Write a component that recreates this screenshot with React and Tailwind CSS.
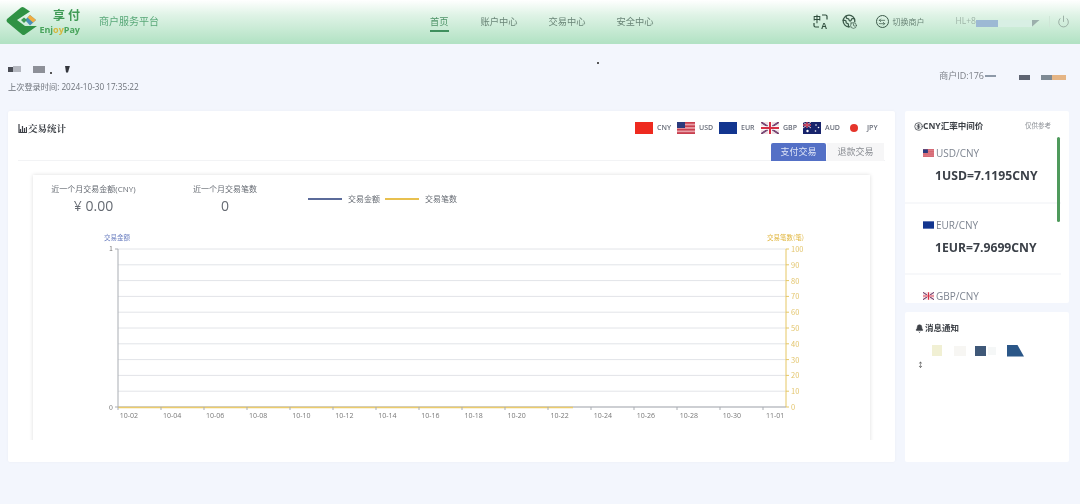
import React from "react";
import { Power, Earth, Clock, ArrowLeftRight, Bell, CircleDollarSign } from "lucide-react";

const nav = ["首页", "账户中心", "交易中心", "安全中心"];
const days = ["10-02", "10-04", "10-06", "10-08", "10-10", "10-12", "10-14", "10-16", "10-18", "10-20", "10-22", "10-24", "10-26", "10-28", "10-30", "11-01"];
const right = [100, 90, 80, 70, 60, 50, 40, 30, 20, 10, 0];

const UsFlag = ({ w = 18, h = 12 }) => (
  <svg width={w} height={h} viewBox="0 0 18 12" className="shrink-0">
    <rect width="18" height="12" fill="#e9a0a8" />
    <rect y="0" width="18" height="1.7" fill="#c8404f" />
    <rect y="3.4" width="18" height="1.7" fill="#c8404f" />
    <rect y="6.8" width="18" height="1.7" fill="#c8404f" />
    <rect y="10.2" width="18" height="1.8" fill="#c8404f" />
    <rect width="8" height="6" fill="#2b3a7c" />
  </svg>
);

const EuFlag = ({ w = 18, h = 12 }) => (
  <svg width={w} height={h} viewBox="0 0 18 12" className="shrink-0">
    <rect width="18" height="12" fill="#12358f" />
  </svg>
);

const UkFlag = ({ w = 18, h = 12 }) => (
  <svg width={w} height={h} viewBox="0 0 18 12" className="shrink-0">
    <rect width="18" height="12" fill="#f3dfe2" />
    <path d="M0 0L18 12M18 0L0 12" stroke="#2b3a7c" strokeWidth="1.6" />
    <path d="M0 0L18 12M18 0L0 12" stroke="#d8455a" strokeWidth="0.7" />
    <path d="M9 0V12M0 6H18" stroke="#fff" strokeWidth="3.4" />
    <path d="M9 0V12M0 6H18" stroke="#d62f45" strokeWidth="2" />
  </svg>
);

const AuFlag = () => (
  <svg width="18" height="12" viewBox="0 0 18 12" className="shrink-0">
    <rect width="18" height="12" fill="#17236b" />
    <path d="M0 0L8 6M8 0L0 6" stroke="#e8c7cf" strokeWidth="1" />
    <path d="M4 0V6M0 3H8" stroke="#d8455a" strokeWidth="1.4" />
    <circle cx="13" cy="3" r="0.8" fill="#fff" />
    <circle cx="15.5" cy="5.5" r="0.8" fill="#fff" />
    <circle cx="12.5" cy="9" r="0.8" fill="#fff" />
    <circle cx="4.5" cy="9" r="1.2" fill="#fff" />
  </svg>
);

const CnFlag = () => <div className="w-[18px] h-3 bg-[#ee2a1f]" />;

const JpFlag = () => (
  <div className="w-[18px] h-3 flex items-center justify-center">
    <div className="w-2 h-2 rounded-full bg-[#e5352b]" />
  </div>
);

const flags = [
  ["CNY", CnFlag],
  ["USD", UsFlag],
  ["EUR", EuFlag],
  ["GBP", UkFlag],
  ["AUD", AuFlag],
  ["JPY", JpFlag],
];

const Logo = () => (
  <svg width="32" height="30" viewBox="0 0 32 30" className="shrink-0">
    <path d="M15 1.5Q16.5 0.5 18 1.5L24 5.5L11 14L19 20H31L19 28.5Q17.5 29.5 16 28.5L1 16Q0 14.5 1 13Z" fill="#2f9244" />
    <path d="M24 9L30 14L24 19.5L19 14Z" fill="#4b8fb5" />
    <path d="M24 9L30 14L27 16.5L21.5 11.5Z" fill="#f1ad3f" />
    <path d="M18 11.5L21 14L18 17L15 14Z" fill="#3c9b52" />
  </svg>
);

const TranslateIcon = () => (
  <svg width="15" height="15" viewBox="0 0 15 15" className="shrink-0 overflow-visible text-[#2f4d3d]">
    <text x="0" y="7.5" fontSize="8" fontWeight="700" fill="currentColor" fontFamily="'Noto Sans CJK SC', sans-serif">中</text>
    <text x="8" y="15" fontSize="8.5" fontWeight="700" fill="currentColor" fontFamily="'Liberation Sans', sans-serif">A</text>
    <path d="M9 1h3.5a1.5 1.5 0 0 1 1.5 1.5v3M1 9v2.5A1.5 1.5 0 0 0 2.5 13H6" fill="none" stroke="currentColor" strokeWidth="1.2" />
  </svg>
);

const RateItem = ({ Flag, pair, value, last }) => (
  <div className={last ? "pl-[18px] pt-[14px]" : "pl-[18px] pt-[14px] h-[71.5px] border-b-2 border-[#f7f8fa] mr-[8px]"}>
    <div className="flex items-center gap-[2px] text-[10px] leading-[14px] text-[#7d8490]">
      <Flag w={11} h={8} />
      <span>{pair}</span>
    </div>
    <div className="mt-[7px] pl-[12px] text-[12.2px] leading-[18px] font-bold text-[#3b4048]">{value}</div>
  </div>
);

const Chart = () => (
  <svg width="837" height="200" viewBox="0 0 837 200" className="block" fontFamily="'Noto Sans CJK SC', sans-serif">
    <text x="71" y="10" fontSize="6.5" fill="#6b7fc0">交易金额</text>
    <text x="734" y="10" fontSize="6.5" fill="#e0b53c">交易笔数(笔)</text>
    {right.map((n, i) => (
      <g key={n}>
        <line x1="85" x2="753" y1={19 + i * 15.8} y2={19 + i * 15.8} stroke="#e2e4e8" />
        <line x1="753" x2="756" y1={19 + i * 15.8} y2={19 + i * 15.8} stroke="#e6c765" />
        <text x="758" y={22 + i * 15.8} fontSize="7.5" fill="#e3c56d">{n}</text>
      </g>
    ))}
    <line x1="85" x2="85" y1="19" y2="177" stroke="#a9adb3" />
    <line x1="753" x2="753" y1="19" y2="177" stroke="#e6c765" />
    <line x1="82" x2="85" y1="19" y2="19" stroke="#a9adb3" />
    <line x1="82" x2="85" y1="177" y2="177" stroke="#a9adb3" />
    <text x="76" y="21" fontSize="7" fill="#777">1</text>
    <text x="76" y="180" fontSize="7" fill="#777">0</text>
    <line x1="85" x2="753" y1="177" y2="177" stroke="#a9adb3" />
    <line x1="85" x2="540" y1="177.5" y2="177.5" stroke="#eccb6a" strokeWidth="1.4" />
    {days.map((d, i) => (
      <g key={d}>
        <line x1={85 + i * 43} x2={85 + i * 43} y1="177" y2="180" stroke="#a9adb3" />
        <text x={96 + i * 43.07} y="188" fontSize="7" fill="#777" textAnchor="middle" fontFamily="'Open Sans', sans-serif">{d}</text>
      </g>
    ))}
  </svg>
);

export default function App() {
  return (
    <div className="w-[1080px] h-[504px] overflow-hidden bg-[#f3f6fd] font-['Open_Sans','Noto_Sans_CJK_SC',sans-serif] text-[#555] blur-[0.5px]">
      <header className="h-11 flex items-center bg-gradient-to-b from-white via-[#dff3e6] via-35% to-[#b2e2c4] border-b border-[#b2e2c4]">
        <div className="ml-[6px] mt-[-1px]"><Logo /></div>
        <div className="w-[42px] flex flex-col items-end">
          <span className="text-[12px] leading-[14px] font-bold tracking-[3px] mr-[-3px] text-[#3f9a55]">享付</span>
          <span className="mt-[1px] text-[9px] leading-[11px] font-bold text-[#49a45c]">Enj<span className="text-[#d8b73c]">oy</span>Pay</span>
        </div>
        <span className="ml-[19px] text-[10px] text-[#58a878]">商户服务平台</span>
        <nav className="ml-[271px] mt-[1px] flex gap-[31px] text-[9.25px] leading-[12px] text-[#6a8577]">
          {nav.map((n, i) => (
            <a key={n} className={i === 0 ? "relative mr-px text-[#4f9468]" : "relative"}>
              {n}
              {i === 0 && <span className="absolute left-0 right-0 top-[14px] h-[2px] bg-[#3f8f5e]" />}
            </a>
          ))}
        </nav>
        <div className="ml-[159px] flex items-center text-[#3c5a4a]">
          <TranslateIcon />
          <span className="relative ml-[14px] w-[15px] h-[15px]">
            <Earth size={14} strokeWidth={2.2} />
            <Clock size={7} strokeWidth={2.5} className="absolute right-0 bottom-0 bg-[#cdebd8] rounded-full" />
          </span>
          <span className="ml-[19px] w-[13px] h-[13px] rounded-full border border-[#3c5a4a] flex items-center justify-center">
            <ArrowLeftRight size={8} strokeWidth={2.2} />
          </span>
          <span className="ml-[4px] text-[8px] text-[#6a8577] w-[32px] whitespace-nowrap">切换商户</span>
          <span className="ml-[31px] text-[8.5px] text-[#9fb5a8] w-[20px]">HL+8</span>
          <span className="w-[22px] h-[7px] mt-[4px] bg-[#9db9d4]" />
          <span className="w-[34px] h-[7px] mt-[4px] bg-[#d8efe4]" />
          <span className="w-[8px] h-[7px] mt-[4px] bg-[#9cafac] [clip-path:polygon(0_0,100%_0,0_100%)]" />
          <span className="ml-[9px] w-px h-[11px] bg-[#cfe6d7]" />
          <Power size={13} strokeWidth={1.4} className="ml-[7px] text-[#8a9c92]" />
        </div>
      </header>

      <div className="h-[67px] pl-2 pr-[10px] flex justify-between">
        <div>
          <div className="mt-[20px] h-[10px] flex items-center text-[#55585f]">
            <span className="w-[5px] h-[5px] bg-[#4a4d55]" />
            <span className="w-[8px] h-[6px] bg-[#b4b7bf]" />
            <span className="ml-[12px] w-[12px] h-[7px] bg-[#8d9098]" />
            <span className="ml-[5px] mt-[8px] w-[2px] h-[2px] bg-[#555]" />
            <span className="ml-[13px] w-[5px] h-[7px] bg-[#33363d] [clip-path:polygon(0_0,100%_0,60%_100%,20%_100%)]" />
          </div>
          <div className="mt-[7px] text-[8.2px] leading-[12px] text-[#6d727a]">上次登录时间: 2024-10-30 17:35:22</div>
        </div>
        <div className="w-[2px] h-[2px] rounded-full bg-[#222] mt-[18px] ml-[458px]" />
        <div className="mt-[26px] ml-auto mr-[4px] flex items-start text-[9px] leading-[12px] text-[#7c8088] h-3">
          <span>商户ID:176</span>
          <span className="ml-[1px] mt-[5px] w-[11px] h-[2px] bg-[#8d99a8]" />
          <span className="ml-[23px] mt-[5px] w-[11px] h-[5px] bg-[#5e6472]" />
          <span className="ml-[11px] mt-[5px] w-[11px] h-[5px] bg-[#7e8a94]" />
          <span className="mt-[5px] w-[14px] h-[5px] bg-[#e5b585]" />
        </div>
      </div>

      <main className="px-2 flex gap-[10px]">
        <section className="w-[887px] h-[351px] bg-white rounded-[2px] shadow-[0_0_3px_rgba(0,0,0,0.04)]">
          <div className="mx-[10px] h-[50px] border-b border-[#f2f3f5] flex justify-between">
            <div className="mt-[11px] flex items-center h-3 gap-[1px] text-[9.5px] font-bold text-[#3e4248] font-['Noto_Serif_CJK_SC','Noto_Sans_CJK_SC',serif]">
              <svg width="9" height="9" viewBox="0 0 9 9">
                <path d="M1 0V8.5H9M2.5 8V5M4.5 8V2M6.5 8V4M8.5 8V3" fill="none" stroke="#3e4248" strokeWidth="1.2" />
              </svg>
              交易统计
            </div>
            <div className="flex flex-col items-end mr-px">
              <div className="mt-[11px] mr-[2px] flex items-center gap-[5px] h-3">
                {flags.map(([name, Flag]) => (
                  <div key={name} className="flex items-center gap-[4px]">
                    <Flag />
                    <span className="w-[15px] text-[7px] font-semibold text-[#6a6f7b]">{name}</span>
                  </div>
                ))}
              </div>
              <div className="mt-[9px] flex text-[9px] leading-[18px] text-center">
                <span className="w-[55px] bg-[#5470c6] text-[#dfe5f7] rounded-t-[2px]">支付交易</span>
                <span className="ml-px w-[57px] bg-[#f6f6f7] text-[#8a8d93]">退款交易</span>
              </div>
            </div>
          </div>

          <div className="mt-[9px] mx-[20px] px-[5px] pt-[5px] h-[270px] overflow-hidden">
            <div className="h-[300px] bg-white shadow-[0_0_4px_rgba(0,0,0,0.14)]">
              <div className="flex pl-[18px] pt-[9px] h-[55px] text-[#666b73]">
                <div className="w-[85px] text-center">
                  <div className="text-[8px] leading-[10px] whitespace-nowrap">近一个月交易金额(CNY)</div>
                  <div className="mt-[2px] text-[14px] leading-[20px]">¥ 0.00</div>
                </div>
                <div className="ml-[57px] w-[64px] text-center">
                  <div className="text-[8px] leading-[10px] whitespace-nowrap">近一个月交易笔数</div>
                  <div className="mt-[2px] text-[14px] leading-[20px]">0</div>
                </div>
                <div className="ml-[51px] mt-[10px] h-[10px] flex items-center text-[8px]">
                  <span className="w-[34px] h-[1.5px] bg-[#5b6b9a]" />
                  <span className="ml-[6px] w-[32px] whitespace-nowrap">交易金额</span>
                  <span className="ml-[5px] w-[34px] h-[1.5px] bg-[#e8c04f]" />
                  <span className="ml-[6px] whitespace-nowrap">交易笔数</span>
                </div>
              </div>
              <Chart />
            </div>
          </div>
        </section>

        <aside className="w-[164px] flex flex-col gap-[9px]">
          <div className="relative h-[192px] bg-white overflow-hidden rounded-[2px]">
            <div className="mt-[9px] ml-[9px] mr-[18px] h-3 flex items-center justify-between">
              <div className="flex items-center text-[8.5px] font-bold text-[#3e4248] whitespace-nowrap">
                <CircleDollarSign size={9} strokeWidth={2} />
                CNY汇率中间价
              </div>
              <span className="text-[6.5px] text-[#8c9096]">仅供参考</span>
            </div>
            <RateItem Flag={UsFlag} pair="USD/CNY" value="1USD=7.1195CNY" />
            <RateItem Flag={EuFlag} pair="EUR/CNY" value="1EUR=7.9699CNY" />
            <RateItem Flag={UkFlag} pair="GBP/CNY" last />
            <div className="absolute left-[152px] top-[26px] w-[3px] h-[85px] rounded-full bg-[#4f9a5c]" />
          </div>
          <div className="h-[150px] bg-white rounded-[2px] pt-[10px]">
            <div className="ml-[10px] flex items-center gap-[1px] text-[8.5px] leading-[12px] font-bold text-[#3e4248]">
              <Bell size={9} fill="currentColor" strokeWidth={1.5} />
              消息通知
            </div>
            <div className="mt-[11px] ml-[27px] flex h-[11px] items-center">
              <span className="w-[10px] h-[11px] bg-[#f1f0d4]" />
              <span className="ml-[12px] w-[12px] h-[10px] bg-[#f7f6f3]" />
              <span className="ml-[9px] w-[11px] h-[10px] bg-[#3f5878]" />
              <span className="ml-[2px] w-[8px] h-[8px] bg-[#f5f7f7]" />
              <span className="ml-[11px] w-[17px] h-[12px] bg-[#2b5788] [clip-path:polygon(0_0,60%_0,100%_100%,0_100%)]" />
            </div>
            <div className="ml-[12px] mt-[4px] text-[7px] leading-[10px] text-[#444]">↕</div>
          </div>
        </aside>
      </main>
    </div>
  );
}
